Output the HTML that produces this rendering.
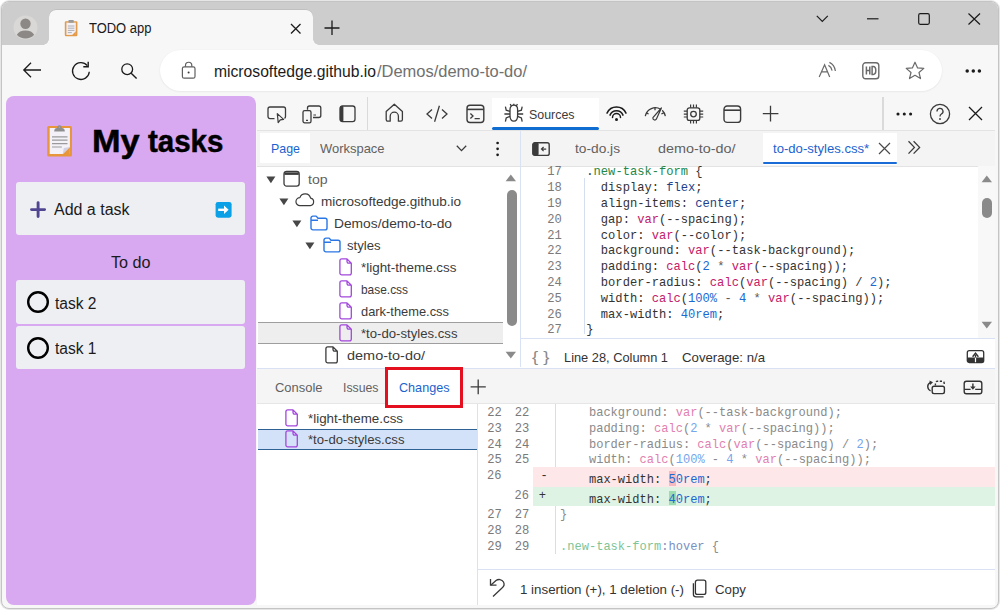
<!DOCTYPE html>
<html><head><meta charset="utf-8"><style>
html,body{margin:0;padding:0;width:1000px;height:610px;overflow:hidden;background:#ffffff;}
.t{position:absolute;white-space:pre;transform-origin:0 0;}
svg{overflow:visible}
</style></head><body>
<div style="position:absolute;left:0px;top:0px;width:1000px;height:610px;background:#e6e6e6;border-radius:9px;"></div>
<div style="position:absolute;left:1px;top:1px;width:998px;height:608px;background:#f7f7f7;border-radius:8px;border:1px solid #c4c4c4;box-sizing:border-box;"></div>
<div style="position:absolute;left:2px;top:2px;width:996px;height:43px;background:#cdcdcd;border-radius:7px 7px 0 0;"></div>
<div style="position:absolute;left:49px;top:9.5px;width:264px;height:36.5px;background:#f7f7f7;border-radius:7px 7px 0 0;box-shadow:0 -0.5px 0.5px rgba(0,0,0,0.12);"></div>
<div style="position:absolute;left:43px;top:39px;width:6px;height:6px;background:radial-gradient(circle at 0 0, #cdcdcd 5.5px, #f7f7f7 6px);"></div>
<div style="position:absolute;left:313px;top:39px;width:6px;height:6px;background:radial-gradient(circle at 100% 0, #cdcdcd 5.5px, #f7f7f7 6px);"></div>
<svg style="position:absolute;left:13px;top:15px;" width="26" height="26" viewBox="0 0 26 26" fill="none"><circle cx="12.5" cy="12.5" r="12" fill="#dad8d6"/><circle cx="12.5" cy="8.8" r="5.2" fill="#8b8885"/><path d="M3.8 19.8 A9.4 6.8 0 0 1 21.2 19.8 A12 12 0 0 1 3.8 19.8Z" fill="#8b8885"/></svg>
<svg style="position:absolute;left:64px;top:19px;" width="16" height="18" viewBox="0 0 16 18" fill="none"><rect x="0.8" y="2.2" width="12.6" height="15" rx="1.2" fill="#e39a4a"/><rect x="2.4" y="3.6" width="9.4" height="12.3" fill="#f3f0f6"/><path d="M8.2 15.9 L11.8 12.3 L11.8 15.9Z" fill="#e39a4a"/><rect x="4.4" y="1" width="5.4" height="2.8" rx="0.8" fill="#9a9a9a"/><path d="M3.8 7h6.6M3.8 9.2h6.6M3.8 11.4h6.6M3.8 13.6h4" stroke="#9aa0a6" stroke-width="0.8"/></svg>
<div id="t0" class="t" style="left:89.3px;top:19.15px;font-size:14px;line-height:18px;color:#1b1b1b;font-weight:400;font-family:'Liberation Sans', sans-serif;transform:scaleX(0.9253);">TODO app</div>
<svg style="position:absolute;left:290px;top:23px;" width="12" height="12" viewBox="0 0 12 12" fill="none"><path d="M1 1 L10.5 10.5 M10.5 1 L1 10.5" stroke="#1b1b1b" stroke-width="1.3"/></svg>
<svg style="position:absolute;left:324px;top:20px;" width="16" height="16" viewBox="0 0 16 16" fill="none"><path d="M8 0.5 V15 M0.5 8 H15.5" stroke="#1b1b1b" stroke-width="1.3"/></svg>
<svg style="position:absolute;left:816px;top:15px;" width="13" height="8" viewBox="0 0 13 8" fill="none"><path d="M0.8 0.8 L6.3 6.3 L11.8 0.8" stroke="#1b1b1b" stroke-width="1.2"/></svg>
<svg style="position:absolute;left:867px;top:18px;" width="12" height="2" viewBox="0 0 12 2" fill="none"><path d="M0 0.8 H11.5" stroke="#1b1b1b" stroke-width="1.2"/></svg>
<svg style="position:absolute;left:918px;top:13px;" width="12" height="12" viewBox="0 0 12 12" fill="none"><rect x="0.7" y="0.7" width="10.6" height="10.6" rx="1.5" stroke="#1b1b1b" stroke-width="1.2"/></svg>
<svg style="position:absolute;left:968px;top:13px;" width="13" height="12" viewBox="0 0 13 12" fill="none"><path d="M0.5 0.5 L12 11.5 M12 0.5 L0.5 11.5" stroke="#1b1b1b" stroke-width="1.2"/></svg>
<svg style="position:absolute;left:23px;top:62px;" width="19" height="16" viewBox="0 0 19 16" fill="none"><path d="M0.8 8 H18 M8 0.8 L0.8 8 L8 15.2" stroke="#1b1b1b" stroke-width="1.3"/></svg>
<svg style="position:absolute;left:71px;top:61px;" width="20" height="20" viewBox="0 0 20 20" fill="none"><path d="M18.3 10.8 A8.4 8.4 0 1 1 16.3 4.6" stroke="#1b1b1b" stroke-width="1.3"/><path d="M17.2 0.8 V5.8 H12.3" stroke="#1b1b1b" stroke-width="1.4"/></svg>
<svg style="position:absolute;left:121px;top:63px;" width="17" height="17" viewBox="0 0 17 17" fill="none"><circle cx="6.2" cy="6.2" r="5.4" stroke="#1b1b1b" stroke-width="1.3"/><path d="M10.2 10.2 L15.6 15.6" stroke="#1b1b1b" stroke-width="1.4"/></svg>
<div style="position:absolute;left:160px;top:50px;width:782px;height:41.3px;background:#ffffff;border-radius:21px;box-shadow:0 0.6px 2px rgba(0,0,0,0.09);"></div>
<svg style="position:absolute;left:181px;top:61px;" width="15" height="18" viewBox="0 0 15 18" fill="none"><path d="M4.5 5.8 V4.4 A3.15 3.15 0 0 1 10.8 4.4 V5.8" stroke="#5f5f5f" stroke-width="1.2"/><rect x="1.4" y="5.8" width="12.6" height="11.4" rx="1.8" stroke="#5f5f5f" stroke-width="1.2"/><circle cx="7.6" cy="11.4" r="1" fill="#3a3a3a"/></svg>
<div id="t1" class="t" style="left:214.3px;top:60.96px;font-size:16px;line-height:21px;color:#1b1b1b;font-weight:400;font-family:'Liberation Sans', sans-serif;transform:scaleX(0.9792);">microsoftedge.github.io</div>
<div id="t2" class="t" style="left:376.6px;top:60.96px;font-size:16px;line-height:21px;color:#707070;font-weight:400;font-family:'Liberation Sans', sans-serif;transform:scaleX(1.0285);">/Demos/demo-to-do/</div>
<svg style="position:absolute;left:818px;top:61px;" width="20" height="18" viewBox="0 0 20 18" fill="none"><path d="M1.2 16 L6.6 3.7 L11.7 16 M3.4 10.9 H9.8" stroke="#6a6a6a" stroke-width="1.2"/><path d="M10.4 4.4 Q13.3 5.8 14.1 9.6 M11.4 1.4 Q16.4 3.6 17.4 10" stroke="#6a6a6a" stroke-width="1.2"/></svg>
<svg style="position:absolute;left:862px;top:62px;" width="18" height="18" viewBox="0 0 18 18" fill="none"><rect x="0.8" y="0.8" width="16" height="16" rx="2.8" stroke="#6a6a6a" stroke-width="1.4"/><path d="M4.4 4.6 V12.4 M7.8 4.6 V12.4 M4.4 8.5 H7.8 M10.1 4.6 V12.4 H11.2 A2.6 3.9 0 0 0 11.2 4.6 Z" stroke="#6a6a6a" stroke-width="1.5"/></svg>
<svg style="position:absolute;left:905px;top:61px;" width="20" height="19" viewBox="0 0 20 19" fill="none"><path d="M10 1.2 L12.6 6.9 L18.8 7.4 L14 11.5 L15.5 17.6 L10 14.3 L4.5 17.6 L6 11.5 L1.2 7.4 L7.4 6.9 Z" stroke="#6a6a6a" stroke-width="1.2" stroke-linejoin="round"/></svg>
<svg style="position:absolute;left:965px;top:69px;" width="17" height="4" viewBox="0 0 17 4" fill="none"><circle cx="2.2" cy="2" r="1.75" fill="#1b1b1b"/><circle cx="8.3" cy="2" r="1.75" fill="#1b1b1b"/><circle cx="14.4" cy="2" r="1.75" fill="#1b1b1b"/></svg>
<div style="position:absolute;left:6px;top:96px;width:250px;height:509px;background:#d8a8f0;border-radius:8px;"></div>
<svg style="position:absolute;left:47px;top:124px;" width="27" height="34" viewBox="0 0 27 34" fill="none"><rect x="0.2" y="1.9" width="24.8" height="30.6" rx="1.6" fill="#e8963c"/><rect x="2.7" y="4" width="20.2" height="26" fill="#f4f2f8"/><path d="M15.8 30 L22.9 22.9 V30 Z" fill="#e8963c"/><path d="M15.8 30 L16.8 23.9 L22.9 22.9 Z" fill="#d3d0e3"/><path d="M7.2 7.6 C7.2 5.2 8 4.2 10 4 H15 C17 4.2 17.8 5.2 17.8 7.6 Z" fill="#8f8f8f"/><circle cx="12.5" cy="3.4" r="2.2" fill="#8f8f8f"/><circle cx="12.5" cy="3.2" r="0.8" fill="#e8963c"/><path d="M5 12.8h15.5M5 16.2h15.5M5 19.6h15.5M5 23h9.8" stroke="#9a9a9a" stroke-width="1.2"/></svg>
<div id="t3" class="t" style="left:91.8px;top:121.66px;font-size:31px;line-height:40px;color:#000000;font-weight:700;font-family:'Liberation Sans', sans-serif;transform:scaleX(1.1050);-webkit-text-stroke:0.5px #000;">My</div>
<div id="t4" class="t" style="left:148.2px;top:121.66px;font-size:31px;line-height:40px;color:#000000;font-weight:700;font-family:'Liberation Sans', sans-serif;transform:scaleX(0.9509);-webkit-text-stroke:0.5px #000;">tasks</div>
<div style="position:absolute;left:16px;top:182px;width:229px;height:53px;background:#eeeff3;border-radius:3px;"></div>
<svg style="position:absolute;left:30px;top:201px;" width="17" height="17" viewBox="0 0 17 17" fill="none"><path d="M8.1 1.6 V15.6 M1.5 8.6 H14.6" stroke="#4f4590" stroke-width="2.9" stroke-linecap="round"/></svg>
<div id="t5" class="t" style="left:53.5px;top:199.26px;font-size:16px;line-height:21px;color:#1b1b1b;font-weight:400;font-family:'Liberation Sans', sans-serif;transform:scaleX(0.9986);">Add a task</div>
<svg style="position:absolute;left:215px;top:201px;" width="17" height="17" viewBox="0 0 17 17" fill="none"><rect x="0.6" y="0.9" width="16" height="15.8" rx="2.4" fill="#0ca0e6"/><path d="M3.2 8.8 H9.6" stroke="#ffffff" stroke-width="2.4"/><path d="M9 4.6 L13.6 8.8 L9 13 Z" fill="#ffffff"/></svg>
<div id="t6" class="t" style="left:111.2px;top:252.36px;font-size:16px;line-height:21px;color:#1b1b1b;font-weight:400;font-family:'Liberation Sans', sans-serif;transform:scaleX(1.0092);">To do</div>
<div style="position:absolute;left:16px;top:280px;width:229px;height:44px;background:#eeeff3;border-radius:3px;"></div>
<div style="position:absolute;left:16px;top:326px;width:229px;height:43px;background:#eeeff3;border-radius:3px;"></div>
<svg style="position:absolute;left:27px;top:291px;" width="22" height="22" viewBox="0 0 22 22" fill="none"><circle cx="11" cy="11" r="9.8" stroke="#000" stroke-width="2.4"/></svg>
<div id="t7" class="t" style="left:54.6px;top:292.66px;font-size:16px;line-height:21px;color:#1b1b1b;font-weight:400;font-family:'Liberation Sans', sans-serif;transform:scaleX(0.9722);">task 2</div>
<svg style="position:absolute;left:27px;top:337px;" width="22" height="22" viewBox="0 0 22 22" fill="none"><circle cx="11" cy="11" r="9.8" stroke="#000" stroke-width="2.4"/></svg>
<div id="t8" class="t" style="left:54.6px;top:338.26px;font-size:16px;line-height:21px;color:#1b1b1b;font-weight:400;font-family:'Liberation Sans', sans-serif;transform:scaleX(0.9722);">task 1</div>
<div style="position:absolute;left:257px;top:96px;width:738px;height:509px;background:#ffffff;"></div>
<div style="position:absolute;left:257px;top:96px;width:738px;height:34px;background:#f7f7f7;border-bottom:1px solid #e3e3e3;"></div>
<div style="position:absolute;left:366.5px;top:97px;width:1.5px;height:33px;background:#dadada;"></div>
<div style="position:absolute;left:882px;top:97px;width:1.5px;height:33px;background:#dadada;"></div>
<svg style="position:absolute;left:267px;top:106px;" width="20" height="18" viewBox="0 0 20 18" fill="none"><path d="M7.5 12.6 H3 A2 2 0 0 1 1 10.6 V3 A2 2 0 0 1 3 1 H16.5 A2 2 0 0 1 18.5 3 V10.6 A2 2 0 0 1 17.5 12.4" stroke="#3b3b3b" stroke-width="1.3"/><path d="M10.3 7.6 L16.6 13.4 L13.3 13.8 L11.2 16.6 Z" stroke="#3b3b3b" stroke-width="1.2" stroke-linejoin="round"/></svg>
<svg style="position:absolute;left:302px;top:105px;" width="21" height="19" viewBox="0 0 21 19" fill="none"><path d="M5.5 4.8 V3 A2 2 0 0 1 7.5 1 H16.8 A2 2 0 0 1 18.8 3 V10.5 A2 2 0 0 1 16.8 12.5 H11" stroke="#3b3b3b" stroke-width="1.3"/><rect x="1" y="5.6" width="8" height="12.2" rx="1.6" stroke="#3b3b3b" stroke-width="1.3"/><path d="M4 15.4 H6 M11.4 10 H14" stroke="#3b3b3b" stroke-width="1.2"/></svg>
<svg style="position:absolute;left:339px;top:105px;" width="17" height="18" viewBox="0 0 17 18" fill="none"><rect x="1" y="1" width="15" height="15.6" rx="2.4" stroke="#3b3b3b" stroke-width="1.3"/><rect x="1" y="1" width="3.4" height="15.6" rx="1" fill="#3b3b3b"/></svg>
<svg style="position:absolute;left:385px;top:103px;" width="19" height="20" viewBox="0 0 19 20" fill="none"><path d="M1.2 8.6 L9.3 1.2 L17.4 8.6 V16.6 A1.6 1.6 0 0 1 15.8 18.2 H13.4 V13.3 A4.1 4.1 0 0 0 5.2 13.3 V18.2 H2.8 A1.6 1.6 0 0 1 1.2 16.6 Z" stroke="#3b3b3b" stroke-width="1.3" stroke-linejoin="round"/></svg>
<svg style="position:absolute;left:426px;top:105px;" width="22" height="18" viewBox="0 0 22 18" fill="none"><path d="M6 4.4 L1 9 L6 13.6 M16 4.4 L21 9 L16 13.6 M13.4 0.8 L8.6 16.8" stroke="#3b3b3b" stroke-width="1.3"/></svg>
<svg style="position:absolute;left:466px;top:104px;" width="19" height="20" viewBox="0 0 19 20" fill="none"><rect x="1" y="1.3" width="16.8" height="17.2" rx="3" stroke="#3b3b3b" stroke-width="1.4"/><path d="M1 5.4 H17.8" stroke="#3b3b3b" stroke-width="1.6"/><path d="M4.4 9.6 L7 12 L4.4 14.4 M8.6 14.6 H13.8" stroke="#3b3b3b" stroke-width="1.3"/></svg>
<div style="position:absolute;left:492px;top:98px;width:107px;height:32px;background:#ffffff;"></div>
<div style="position:absolute;left:492px;top:126.5px;width:107px;height:3.5px;background:#0f6cd0;border-radius:2px;"></div>
<svg style="position:absolute;left:503px;top:103px;" width="22" height="20" viewBox="0 0 22 20" fill="none"><path d="M7 6.5 C7 3.8 8.4 2.2 10.8 2.2 C13.2 2.2 14.6 3.8 14.6 6.5 V12.8 C14.6 16.4 13 18.2 10.8 18.2 C8.6 18.2 7 16.4 7 12.8 Z" stroke="#3b3b3b" stroke-width="1.3"/><path d="M8.4 3.2 L7.2 1 M13.2 3.2 L14.4 1 M10.8 2.2 V0.8 M7 8.4 L3.2 7.2 L2.4 3.6 M14.6 8.4 L18.4 7.2 L19.2 3.6 M7 11 H1.4 M14.6 11 H20.2 M7 13.4 L3.2 15 L2.4 18.6 M14.6 13.4 L18.4 15 L19.2 18.6" stroke="#3b3b3b" stroke-width="1.3"/></svg>
<div id="t9" class="t" style="left:529.2px;top:105.62px;font-size:13.5px;line-height:18px;color:#3b3b3b;font-weight:400;font-family:'Liberation Sans', sans-serif;transform:scaleX(0.9186);">Sources</div>
<svg style="position:absolute;left:604px;top:103px;" width="25" height="19" viewBox="0 0 25 19" fill="none"><path d="M3 10.1 A10.5 10.5 0 0 1 22 10.1 M6 12.1 A7 7 0 0 1 19 12.1 M8.5 14.5 A4 4 0 0 1 16.5 14.5" stroke="#1b1b1b" stroke-width="1.5" stroke-linecap="round"/><circle cx="12.5" cy="16.4" r="1.5" fill="#1b1b1b"/></svg>
<svg style="position:absolute;left:643px;top:104px;" width="25" height="18" viewBox="0 0 25 18" fill="none"><path d="M2.4 11.6 A10.2 10.2 0 0 1 17.6 5.2 M19.6 6.8 A10.2 10.2 0 0 1 22.2 11.6" stroke="#3b3b3b" stroke-width="1.3" stroke-linecap="round"/><path d="M3.3 8.8 L5.6 10 M12 3.6 V6.2 M20.7 8.8 L18.4 10" stroke="#3b3b3b" stroke-width="1.3"/><path d="M18.4 4 L13.3 15.2 A1.9 1.9 0 0 1 9.9 13.7 Z" stroke="#3b3b3b" stroke-width="1.2" stroke-linejoin="round"/></svg>
<svg style="position:absolute;left:683px;top:104px;" width="21" height="20" viewBox="0 0 21 20" fill="none"><rect x="4.2" y="3.8" width="12.6" height="12.6" rx="2.2" stroke="#3b3b3b" stroke-width="1.3"/><circle cx="10.5" cy="10.1" r="2.8" stroke="#3b3b3b" stroke-width="1.3"/><path d="M7.6 0.6 V3.8 M10.5 0.6 V3.8 M13.4 0.6 V3.8 M7.6 16.4 V19.6 M10.5 16.4 V19.6 M13.4 16.4 V19.6 M0.8 7.2 H4.2 M0.8 10.1 H4.2 M0.8 13 H4.2 M16.8 7.2 H20.2 M16.8 10.1 H20.2 M16.8 13 H20.2" stroke="#3b3b3b" stroke-width="1.2"/></svg>
<svg style="position:absolute;left:723px;top:105px;" width="19" height="18" viewBox="0 0 19 18" fill="none"><rect x="1" y="1" width="16.6" height="16.4" rx="3.2" stroke="#3b3b3b" stroke-width="1.4"/><path d="M1 5.2 H17.6" stroke="#3b3b3b" stroke-width="1.6"/></svg>
<svg style="position:absolute;left:762px;top:105px;" width="17" height="17" viewBox="0 0 17 17" fill="none"><path d="M8.5 0.8 V16.4 M0.8 8.6 H16.4" stroke="#3b3b3b" stroke-width="1.3"/></svg>
<svg style="position:absolute;left:896px;top:112px;" width="17" height="4" viewBox="0 0 17 4" fill="none"><circle cx="2" cy="2" r="1.55" fill="#1b1b1b"/><circle cx="8.3" cy="2" r="1.55" fill="#1b1b1b"/><circle cx="14.6" cy="2" r="1.55" fill="#1b1b1b"/></svg>
<svg style="position:absolute;left:929px;top:103px;" width="22" height="22" viewBox="0 0 22 22" fill="none"><circle cx="11" cy="11" r="9.6" stroke="#3b3b3b" stroke-width="1.3"/><path d="M8 8.4 A3 3 0 1 1 12.4 11 C11.4 11.6 11 12.2 11 13.4" stroke="#3b3b3b" stroke-width="1.3"/><circle cx="11" cy="16" r="0.95" fill="#3b3b3b"/></svg>
<svg style="position:absolute;left:968px;top:106px;" width="15" height="15" viewBox="0 0 15 15" fill="none"><path d="M1 1 L14 14 M14 1 L1 14" stroke="#1b1b1b" stroke-width="1.3"/></svg>
<div style="position:absolute;left:257px;top:131px;width:263px;height:35px;background:#f4f4f4;border-bottom:1px solid #e3e3e3;"></div>
<div style="position:absolute;left:260px;top:133px;width:50px;height:29.5px;background:#ffffff;"></div>
<div id="t10" class="t" style="left:270.7px;top:140.26px;font-size:12.8px;line-height:17px;color:#1a63cf;font-weight:400;font-family:'Liberation Sans', sans-serif;transform:scaleX(0.9702);">Page</div>
<div id="t11" class="t" style="left:319.7px;top:140.26px;font-size:12.8px;line-height:17px;color:#616161;font-weight:400;font-family:'Liberation Sans', sans-serif;transform:scaleX(1.0113);">Workspace</div>
<svg style="position:absolute;left:456px;top:145px;" width="11" height="7" viewBox="0 0 11 7" fill="none"><path d="M0.8 0.8 L5.5 5.6 L10.2 0.8" stroke="#3b3b3b" stroke-width="1.3"/></svg>
<svg style="position:absolute;left:495px;top:141px;" width="5" height="16" viewBox="0 0 5 16" fill="none"><circle cx="2.6" cy="2" r="1.35" fill="#1b1b1b"/><circle cx="2.6" cy="7.8" r="1.35" fill="#1b1b1b"/><circle cx="2.6" cy="13.8" r="1.35" fill="#1b1b1b"/></svg>
<div style="position:absolute;left:521px;top:131px;width:474px;height:35px;background:#f4f4f4;border-bottom:1px solid #e3e3e3;"></div>
<div style="position:absolute;left:520px;top:131px;width:1px;height:236px;background:#d8e2f4;"></div>
<svg style="position:absolute;left:532px;top:142px;" width="19" height="15" viewBox="0 0 19 15" fill="none"><rect x="0.8" y="0.8" width="16.4" height="12.6" rx="2" stroke="#3b3b3b" stroke-width="1.4"/><rect x="0.8" y="0.8" width="5.8" height="12.6" rx="1.4" fill="#3b3b3b"/><path d="M14.2 7.1 H9.6 M11.6 5 L9.5 7.1 L11.6 9.2" stroke="#3b3b3b" stroke-width="1.2"/></svg>
<div id="t12" class="t" style="left:574.5px;top:140.26px;font-size:12.8px;line-height:17px;color:#616161;font-weight:400;font-family:'Liberation Sans', sans-serif;transform:scaleX(1.0722);">to-do.js</div>
<div id="t13" class="t" style="left:657.5px;top:140.26px;font-size:12.8px;line-height:17px;color:#616161;font-weight:400;font-family:'Liberation Sans', sans-serif;transform:scaleX(1.1232);">demo-to-do/</div>
<div style="position:absolute;left:763px;top:133px;width:134px;height:32px;background:#ffffff;"></div>
<div style="position:absolute;left:763px;top:162px;width:134px;height:2.4px;background:#1a6ad8;border-radius:1px;"></div>
<div id="t14" class="t" style="left:773.4px;top:140.36px;font-size:12.8px;line-height:17px;color:#1a63cf;font-weight:400;font-family:'Liberation Sans', sans-serif;transform:scaleX(1.0248);">to-do-styles.css*</div>
<svg style="position:absolute;left:878px;top:142px;" width="13" height="13" viewBox="0 0 13 13" fill="none"><path d="M1 1 L12 12 M12 1 L1 12" stroke="#4a4a4a" stroke-width="1.2"/></svg>
<svg style="position:absolute;left:907px;top:140px;" width="15" height="15" viewBox="0 0 15 15" fill="none"><path d="M1.5 1.2 L7.4 7.4 L1.5 13.6 M6.6 1.2 L12.6 7.4 L6.6 13.6" stroke="#3b3b3b" stroke-width="1.3"/></svg>
<div style="position:absolute;left:258px;top:322px;width:245px;height:21.5px;background:#eeeeee;border-top:1.5px solid #9e9e9e;border-bottom:1.5px solid #9e9e9e;box-sizing:border-box;"></div>
<svg style="position:absolute;left:265.5px;top:175.5px;" width="10" height="8" viewBox="0 0 10 8" fill="none"><path d="M0.4 0.6 H9.4 L4.9 7.2 Z" fill="#474747"/></svg>
<svg style="position:absolute;left:283px;top:170px;" width="18" height="17" viewBox="0 0 18 17" fill="none"><rect x="1" y="1.3" width="15.2" height="14.8" rx="2.6" stroke="#3b3b3b" stroke-width="1.3"/><path d="M1.4 3.6 H15.8" stroke="#3b3b3b" stroke-width="2.6"/></svg>
<div id="t15" class="t" style="left:307.8px;top:171.16px;font-size:13.4px;line-height:17px;color:#616161;font-weight:400;font-family:'Liberation Sans', sans-serif;transform:scaleX(1.0523);">top</div>
<svg style="position:absolute;left:279px;top:197.5px;" width="10" height="8" viewBox="0 0 10 8" fill="none"><path d="M0.4 0.6 H9.4 L4.9 7.2 Z" fill="#474747"/></svg>
<svg style="position:absolute;left:295px;top:193px;" width="20" height="14" viewBox="0 0 20 14" fill="none"><path d="M5 12.6 H15.2 A3.8 3.8 0 0 0 15.6 5.1 A5.6 5.6 0 0 0 4.9 4.6 A4 4 0 0 0 5 12.6 Z" stroke="#3b3b3b" stroke-width="1.2" stroke-linejoin="round"/></svg>
<div id="t16" class="t" style="left:320.8px;top:193.16px;font-size:13.4px;line-height:17px;color:#3b3b3b;font-weight:400;font-family:'Liberation Sans', sans-serif;transform:scaleX(1.0112);">microsoftedge.github.io</div>
<svg style="position:absolute;left:292px;top:219.5px;" width="10" height="8" viewBox="0 0 10 8" fill="none"><path d="M0.4 0.6 H9.4 L4.9 7.2 Z" fill="#474747"/></svg>
<svg style="position:absolute;left:309.5px;top:214.5px;" width="18" height="16" viewBox="0 0 18 16" fill="none"><path d="M1 3 A1.9 1.9 0 0 1 2.9 1.1 H6.2 L8 3.2 H15.1 A1.9 1.9 0 0 1 17 5.1 V13 A1.9 1.9 0 0 1 15.1 14.9 H2.9 A1.9 1.9 0 0 1 1 13 Z M1 5.2 H8" stroke="#2a76e6" stroke-width="1.4" stroke-linejoin="round"/></svg>
<div id="t17" class="t" style="left:333.8px;top:215.16px;font-size:13.4px;line-height:17px;color:#3b3b3b;font-weight:400;font-family:'Liberation Sans', sans-serif;transform:scaleX(1.0294);">Demos/demo-to-do</div>
<svg style="position:absolute;left:305px;top:241.5px;" width="10" height="8" viewBox="0 0 10 8" fill="none"><path d="M0.4 0.6 H9.4 L4.9 7.2 Z" fill="#474747"/></svg>
<svg style="position:absolute;left:322.5px;top:236.5px;" width="18" height="16" viewBox="0 0 18 16" fill="none"><path d="M1 3 A1.9 1.9 0 0 1 2.9 1.1 H6.2 L8 3.2 H15.1 A1.9 1.9 0 0 1 17 5.1 V13 A1.9 1.9 0 0 1 15.1 14.9 H2.9 A1.9 1.9 0 0 1 1 13 Z M1 5.2 H8" stroke="#2a76e6" stroke-width="1.4" stroke-linejoin="round"/></svg>
<div id="t18" class="t" style="left:346.8px;top:237.16px;font-size:13.4px;line-height:17px;color:#3b3b3b;font-weight:400;font-family:'Liberation Sans', sans-serif;transform:scaleX(0.9785);">styles</div>
<svg style="position:absolute;left:337.5px;top:258.0px;" width="15" height="18" viewBox="0 0 15 18" fill="none"><path d="M1.9 2.8 A1.9 1.9 0 0 1 3.8 0.9 H9 L13.3 5.2 V15 A1.9 1.9 0 0 1 11.4 16.9 H3.8 A1.9 1.9 0 0 1 1.9 15 Z M9 0.9 V3.6 A1.6 1.6 0 0 0 10.6 5.2 H13.3" stroke="#a347dc" stroke-width="1.3" stroke-linejoin="round"/></svg>
<div id="t19" class="t" style="left:360.6px;top:259.16px;font-size:13.4px;line-height:17px;color:#3b3b3b;font-weight:400;font-family:'Liberation Sans', sans-serif;transform:scaleX(1.0025);">*light-theme.css</div>
<svg style="position:absolute;left:337.5px;top:280.0px;" width="15" height="18" viewBox="0 0 15 18" fill="none"><path d="M1.9 2.8 A1.9 1.9 0 0 1 3.8 0.9 H9 L13.3 5.2 V15 A1.9 1.9 0 0 1 11.4 16.9 H3.8 A1.9 1.9 0 0 1 1.9 15 Z M9 0.9 V3.6 A1.6 1.6 0 0 0 10.6 5.2 H13.3" stroke="#a347dc" stroke-width="1.3" stroke-linejoin="round"/></svg>
<div id="t20" class="t" style="left:360.6px;top:281.16px;font-size:13.4px;line-height:17px;color:#3b3b3b;font-weight:400;font-family:'Liberation Sans', sans-serif;transform:scaleX(0.8894);">base.css</div>
<svg style="position:absolute;left:337.5px;top:302.0px;" width="15" height="18" viewBox="0 0 15 18" fill="none"><path d="M1.9 2.8 A1.9 1.9 0 0 1 3.8 0.9 H9 L13.3 5.2 V15 A1.9 1.9 0 0 1 11.4 16.9 H3.8 A1.9 1.9 0 0 1 1.9 15 Z M9 0.9 V3.6 A1.6 1.6 0 0 0 10.6 5.2 H13.3" stroke="#a347dc" stroke-width="1.3" stroke-linejoin="round"/></svg>
<div id="t21" class="t" style="left:360.6px;top:303.16px;font-size:13.4px;line-height:17px;color:#3b3b3b;font-weight:400;font-family:'Liberation Sans', sans-serif;transform:scaleX(0.9614);">dark-theme.css</div>
<svg style="position:absolute;left:337.5px;top:324.0px;" width="15" height="18" viewBox="0 0 15 18" fill="none"><path d="M1.9 2.8 A1.9 1.9 0 0 1 3.8 0.9 H9 L13.3 5.2 V15 A1.9 1.9 0 0 1 11.4 16.9 H3.8 A1.9 1.9 0 0 1 1.9 15 Z M9 0.9 V3.6 A1.6 1.6 0 0 0 10.6 5.2 H13.3" stroke="#a347dc" stroke-width="1.3" stroke-linejoin="round"/></svg>
<div id="t22" class="t" style="left:360.6px;top:325.16px;font-size:13.4px;line-height:17px;color:#3b3b3b;font-weight:400;font-family:'Liberation Sans', sans-serif;transform:scaleX(0.9823);">*to-do-styles.css</div>
<svg style="position:absolute;left:324px;top:346.0px;" width="15" height="18" viewBox="0 0 15 18" fill="none"><path d="M1.9 2.8 A1.9 1.9 0 0 1 3.8 0.9 H9 L13.3 5.2 V15 A1.9 1.9 0 0 1 11.4 16.9 H3.8 A1.9 1.9 0 0 1 1.9 15 Z M9 0.9 V3.6 A1.6 1.6 0 0 0 10.6 5.2 H13.3" stroke="#3b3b3b" stroke-width="1.3" stroke-linejoin="round"/></svg>
<div id="t23" class="t" style="left:346.8px;top:347.16px;font-size:13.4px;line-height:17px;color:#3b3b3b;font-weight:400;font-family:'Liberation Sans', sans-serif;transform:scaleX(1.0803);">demo-to-do/</div>
<svg style="position:absolute;left:505px;top:174px;" width="12" height="8" viewBox="0 0 12 8" fill="none"><path d="M0.6 7.2 H11 L5.8 0.6 Z" fill="#8a8a8a"/></svg>
<div style="position:absolute;left:506.5px;top:190px;width:10px;height:136px;background:#8a8a8a;border-radius:5px;"></div>
<svg style="position:absolute;left:505px;top:351px;" width="12" height="8" viewBox="0 0 12 8" fill="none"><path d="M0.6 0.8 H11 L5.8 7.4 Z" fill="#8a8a8a"/></svg>
<div id="t24" class="t" style="left:547.2px;top:164.26px;font-size:12.17px;line-height:16px;color:#7a7a7a;font-weight:400;font-family:'Liberation Mono', monospace;">17</div>
<div id="t25" class="t" style="left:586.3px;top:164.27px;font-size:12.12px;line-height:16px;color:#1b1b1b;font-weight:400;font-family:'Liberation Mono', monospace;"><span style="color:#333333">.</span><span style="color:#238747">new-task-form</span><span style="color:#333333"> {</span></div>
<div id="t26" class="t" style="left:547.2px;top:180.07px;font-size:12.17px;line-height:16px;color:#7a7a7a;font-weight:400;font-family:'Liberation Mono', monospace;">18</div>
<div id="t27" class="t" style="left:586.3px;top:180.08px;font-size:12.12px;line-height:16px;color:#1b1b1b;font-weight:400;font-family:'Liberation Mono', monospace;"><span style="color:#333333">  display: </span><span style="color:#233f8c">flex</span><span style="color:#333333">;</span></div>
<div id="t28" class="t" style="left:547.2px;top:195.88px;font-size:12.17px;line-height:16px;color:#7a7a7a;font-weight:400;font-family:'Liberation Mono', monospace;">19</div>
<div id="t29" class="t" style="left:586.3px;top:195.89px;font-size:12.12px;line-height:16px;color:#1b1b1b;font-weight:400;font-family:'Liberation Mono', monospace;"><span style="color:#333333">  align-items: </span><span style="color:#233f8c">center</span><span style="color:#333333">;</span></div>
<div id="t30" class="t" style="left:547.2px;top:211.69px;font-size:12.17px;line-height:16px;color:#7a7a7a;font-weight:400;font-family:'Liberation Mono', monospace;">20</div>
<div id="t31" class="t" style="left:586.3px;top:211.70px;font-size:12.12px;line-height:16px;color:#1b1b1b;font-weight:400;font-family:'Liberation Mono', monospace;"><span style="color:#333333">  gap: </span><span style="color:#c4206a">var</span><span style="color:#333333">(--spacing);</span></div>
<div id="t32" class="t" style="left:547.2px;top:227.50px;font-size:12.17px;line-height:16px;color:#7a7a7a;font-weight:400;font-family:'Liberation Mono', monospace;">21</div>
<div id="t33" class="t" style="left:586.3px;top:227.51px;font-size:12.12px;line-height:16px;color:#1b1b1b;font-weight:400;font-family:'Liberation Mono', monospace;"><span style="color:#333333">  color: </span><span style="color:#c4206a">var</span><span style="color:#333333">(--color);</span></div>
<div id="t34" class="t" style="left:547.2px;top:243.31px;font-size:12.17px;line-height:16px;color:#7a7a7a;font-weight:400;font-family:'Liberation Mono', monospace;">22</div>
<div id="t35" class="t" style="left:586.3px;top:243.32px;font-size:12.12px;line-height:16px;color:#1b1b1b;font-weight:400;font-family:'Liberation Mono', monospace;"><span style="color:#333333">  background: </span><span style="color:#c4206a">var</span><span style="color:#333333">(--task-background);</span></div>
<div id="t36" class="t" style="left:547.2px;top:259.12px;font-size:12.17px;line-height:16px;color:#7a7a7a;font-weight:400;font-family:'Liberation Mono', monospace;">23</div>
<div id="t37" class="t" style="left:586.3px;top:259.13px;font-size:12.12px;line-height:16px;color:#1b1b1b;font-weight:400;font-family:'Liberation Mono', monospace;"><span style="color:#333333">  padding: </span><span style="color:#c4206a">calc</span><span style="color:#333333">(</span><span style="color:#1b69d2">2</span><span style="color:#5a5a5a"> * </span><span style="color:#c4206a">var</span><span style="color:#333333">(--spacing));</span></div>
<div id="t38" class="t" style="left:547.2px;top:274.93px;font-size:12.17px;line-height:16px;color:#7a7a7a;font-weight:400;font-family:'Liberation Mono', monospace;">24</div>
<div id="t39" class="t" style="left:586.3px;top:274.94px;font-size:12.12px;line-height:16px;color:#1b1b1b;font-weight:400;font-family:'Liberation Mono', monospace;"><span style="color:#333333">  border-radius: </span><span style="color:#c4206a">calc</span><span style="color:#333333">(</span><span style="color:#c4206a">var</span><span style="color:#333333">(--spacing) / </span><span style="color:#1b69d2">2</span><span style="color:#333333">);</span></div>
<div id="t40" class="t" style="left:547.2px;top:290.74px;font-size:12.17px;line-height:16px;color:#7a7a7a;font-weight:400;font-family:'Liberation Mono', monospace;">25</div>
<div id="t41" class="t" style="left:586.3px;top:290.75px;font-size:12.12px;line-height:16px;color:#1b1b1b;font-weight:400;font-family:'Liberation Mono', monospace;"><span style="color:#333333">  width: </span><span style="color:#c4206a">calc</span><span style="color:#333333">(</span><span style="color:#1b69d2">100%</span><span style="color:#5a5a5a"> - </span><span style="color:#1b69d2">4</span><span style="color:#5a5a5a"> * </span><span style="color:#c4206a">var</span><span style="color:#333333">(--spacing));</span></div>
<div id="t42" class="t" style="left:547.2px;top:306.55px;font-size:12.17px;line-height:16px;color:#7a7a7a;font-weight:400;font-family:'Liberation Mono', monospace;">26</div>
<div id="t43" class="t" style="left:586.3px;top:306.56px;font-size:12.12px;line-height:16px;color:#1b1b1b;font-weight:400;font-family:'Liberation Mono', monospace;"><span style="color:#333333">  max-width: </span><span style="color:#1b69d2">40rem</span><span style="color:#333333">;</span></div>
<div id="t44" class="t" style="left:547.2px;top:322.36px;font-size:12.17px;line-height:16px;color:#7a7a7a;font-weight:400;font-family:'Liberation Mono', monospace;">27</div>
<div id="t45" class="t" style="left:586.3px;top:322.37px;font-size:12.12px;line-height:16px;color:#1b1b1b;font-weight:400;font-family:'Liberation Mono', monospace;"><span style="color:#333333">}</span></div>
<div style="position:absolute;left:584px;top:178px;width:1px;height:156px;background:#d5def0;"></div>
<div style="position:absolute;left:978px;top:166px;width:17px;height:172px;background:#f8f8f8;"></div>
<svg style="position:absolute;left:981px;top:175px;" width="12" height="8" viewBox="0 0 12 8" fill="none"><path d="M0.6 7.2 H11 L5.8 0.6 Z" fill="#8a8a8a"/></svg>
<div style="position:absolute;left:982px;top:198px;width:10px;height:20px;background:#8a8a8a;border-radius:5px;"></div>
<svg style="position:absolute;left:981px;top:321px;" width="12" height="8" viewBox="0 0 12 8" fill="none"><path d="M0.6 0.8 H11 L5.8 7.4 Z" fill="#8a8a8a"/></svg>
<div style="position:absolute;left:521px;top:338px;width:474px;height:30px;background:#ffffff;border-top:1px solid #d8e2f4;"></div>
<div style="position:absolute;left:257px;top:368px;width:738px;height:1px;background:#d8e2f4;"></div>
<div id="t46" class="t" style="left:531.8px;top:346.93px;font-size:15.5px;line-height:20px;color:#8a8a8a;font-weight:400;font-family:'Liberation Sans', sans-serif;transform:scaleX(1.1928);">{ }</div>
<div id="t47" class="t" style="left:563.5px;top:349.40px;font-size:13px;line-height:17px;color:#333333;font-weight:400;font-family:'Liberation Sans', sans-serif;transform:scaleX(0.9856);">Line 28, Column 1</div>
<div id="t48" class="t" style="left:681.5px;top:349.40px;font-size:13px;line-height:17px;color:#333333;font-weight:400;font-family:'Liberation Sans', sans-serif;transform:scaleX(1.0163);">Coverage: n/a</div>
<svg style="position:absolute;left:966px;top:349px;" width="19" height="15" viewBox="0 0 19 15" fill="none"><rect x="1.3" y="1.7" width="16.4" height="11.8" rx="2" stroke="#333" stroke-width="1.3" fill="#fff"/><rect x="1.3" y="8.6" width="16.4" height="4.9" rx="1" fill="#333"/><path d="M9.5 9 V6" stroke="#333" stroke-width="1.3"/><path d="M9.5 13.2 V8.6" stroke="#fff" stroke-width="1.2"/><path d="M6.6 7.8 L9.5 4.2 L12.4 7.8" stroke="#333" stroke-width="1.4" fill="none"/></svg>
<div style="position:absolute;left:257px;top:369px;width:738px;height:35px;background:#f5f5f5;border-bottom:1px solid #e6e6e6;box-sizing:border-box;"></div>
<div style="position:absolute;left:386px;top:369px;width:75px;height:35px;background:#ffffff;"></div>
<div id="t49" class="t" style="left:274.5px;top:379.16px;font-size:13.4px;line-height:17px;color:#616161;font-weight:400;font-family:'Liberation Sans', sans-serif;transform:scaleX(0.9666);">Console</div>
<div id="t50" class="t" style="left:342.8px;top:379.16px;font-size:13.4px;line-height:17px;color:#616161;font-weight:400;font-family:'Liberation Sans', sans-serif;transform:scaleX(0.9172);">Issues</div>
<div id="t51" class="t" style="left:398.7px;top:379.16px;font-size:13.4px;line-height:17px;color:#1a63cf;font-weight:400;font-family:'Liberation Sans', sans-serif;transform:scaleX(0.9420);">Changes</div>
<svg style="position:absolute;left:470px;top:379px;" width="17" height="16" viewBox="0 0 17 16" fill="none"><path d="M8.2 0.6 V15.2 M0.6 7.9 H15.8" stroke="#3b3b3b" stroke-width="1.3"/></svg>
<div style="position:absolute;left:384.5px;top:367px;width:78.5px;height:40.7px;border:3px solid #e5101f;box-sizing:border-box;"></div>
<svg style="position:absolute;left:926px;top:380px;" width="21" height="16" viewBox="0 0 21 16" fill="none"><path d="M4.6 10.8 A4.5 4.5 0 0 1 4.2 2.6" stroke="#333" stroke-width="1.4"/><path d="M3.4 0.6 L7 2.2 L4.2 5 Z" fill="#333"/><rect x="6.2" y="6.2" width="12.2" height="7.4" rx="1.8" stroke="#333" stroke-width="1.4"/><path d="M9.4 5.6 V3.2 A1.9 1.9 0 0 1 11.3 1.3 H16.3 A1.9 1.9 0 0 1 18.2 3.2 V5.6" stroke="#333" stroke-width="1.4" stroke-dasharray="2.2 1.6"/></svg>
<svg style="position:absolute;left:963px;top:380px;" width="20" height="16" viewBox="0 0 20 16" fill="none"><rect x="1.2" y="1.2" width="17.6" height="12.6" rx="2.2" stroke="#333" stroke-width="1.4"/><path d="M1.2 9.4 H7.6 M12.2 9.4 H18.8" stroke="#333" stroke-width="1.3"/><path d="M9.9 3.4 V7.6" stroke="#333" stroke-width="1.4"/><path d="M7.2 6.6 L12.6 6.6 L9.9 9.8 Z" fill="#333"/></svg>
<div style="position:absolute;left:477px;top:404px;width:1px;height:201px;background:#d8e2f4;"></div>
<svg style="position:absolute;left:284px;top:408.5px;" width="15" height="18" viewBox="0 0 15 18" fill="none"><path d="M1.9 2.8 A1.9 1.9 0 0 1 3.8 0.9 H9 L13.3 5.2 V15 A1.9 1.9 0 0 1 11.4 16.9 H3.8 A1.9 1.9 0 0 1 1.9 15 Z M9 0.9 V3.6 A1.6 1.6 0 0 0 10.6 5.2 H13.3" stroke="#a347dc" stroke-width="1.3" stroke-linejoin="round"/></svg>
<div id="t52" class="t" style="left:307.6px;top:410.06px;font-size:13.4px;line-height:17px;color:#3b3b3b;font-weight:400;font-family:'Liberation Sans', sans-serif;transform:scaleX(0.9972);">*light-theme.css</div>
<div style="position:absolute;left:258px;top:428.5px;width:219px;height:21px;background:#d3e2f8;border-top:1.5px solid #2e6294;border-bottom:1.5px solid #2e6294;box-sizing:border-box;"></div>
<svg style="position:absolute;left:284px;top:430px;" width="15" height="18" viewBox="0 0 15 18" fill="none"><path d="M1.9 2.8 A1.9 1.9 0 0 1 3.8 0.9 H9 L13.3 5.2 V15 A1.9 1.9 0 0 1 11.4 16.9 H3.8 A1.9 1.9 0 0 1 1.9 15 Z M9 0.9 V3.6 A1.6 1.6 0 0 0 10.6 5.2 H13.3" stroke="#a347dc" stroke-width="1.3" stroke-linejoin="round"/></svg>
<div id="t53" class="t" style="left:307.6px;top:430.76px;font-size:13.4px;line-height:17px;color:#3b3b3b;font-weight:400;font-family:'Liberation Sans', sans-serif;transform:scaleX(0.9823);">*to-do-styles.css</div>
<div style="position:absolute;left:555px;top:404px;width:1px;height:150px;background:#d5def0;"></div>
<div id="t54" class="t" style="left:487.2px;top:405.06px;font-size:12.17px;line-height:16px;color:#7a7a7a;font-weight:400;font-family:'Liberation Mono', monospace;">22</div>
<div id="t55" class="t" style="left:514.8px;top:405.06px;font-size:12.17px;line-height:16px;color:#7a7a7a;font-weight:400;font-family:'Liberation Mono', monospace;">22</div>
<div id="t56" class="t" style="left:560px;top:405.09px;font-size:12.05px;line-height:16px;color:#1b1b1b;font-weight:400;font-family:'Liberation Mono', monospace;"><span style="color:#8a8a8a">    background: </span><span style="color:#e27fb0">var</span><span style="color:#8a8a8a">(--task-background);</span></div>
<div id="t57" class="t" style="left:487.2px;top:420.76px;font-size:12.17px;line-height:16px;color:#7a7a7a;font-weight:400;font-family:'Liberation Mono', monospace;">23</div>
<div id="t58" class="t" style="left:514.8px;top:420.76px;font-size:12.17px;line-height:16px;color:#7a7a7a;font-weight:400;font-family:'Liberation Mono', monospace;">23</div>
<div id="t59" class="t" style="left:560px;top:420.79px;font-size:12.05px;line-height:16px;color:#1b1b1b;font-weight:400;font-family:'Liberation Mono', monospace;"><span style="color:#8a8a8a">    padding: </span><span style="color:#e27fb0">calc</span><span style="color:#8a8a8a">(</span><span style="color:#76a6ec">2</span><span style="color:#8a8a8a"> * </span><span style="color:#e27fb0">var</span><span style="color:#8a8a8a">(--spacing));</span></div>
<div id="t60" class="t" style="left:487.2px;top:436.56px;font-size:12.17px;line-height:16px;color:#7a7a7a;font-weight:400;font-family:'Liberation Mono', monospace;">24</div>
<div id="t61" class="t" style="left:514.8px;top:436.56px;font-size:12.17px;line-height:16px;color:#7a7a7a;font-weight:400;font-family:'Liberation Mono', monospace;">24</div>
<div id="t62" class="t" style="left:560px;top:436.59px;font-size:12.05px;line-height:16px;color:#1b1b1b;font-weight:400;font-family:'Liberation Mono', monospace;"><span style="color:#8a8a8a">    border-radius: </span><span style="color:#e27fb0">calc</span><span style="color:#8a8a8a">(</span><span style="color:#e27fb0">var</span><span style="color:#8a8a8a">(--spacing) / </span><span style="color:#76a6ec">2</span><span style="color:#8a8a8a">);</span></div>
<div id="t63" class="t" style="left:487.2px;top:452.26px;font-size:12.17px;line-height:16px;color:#7a7a7a;font-weight:400;font-family:'Liberation Mono', monospace;">25</div>
<div id="t64" class="t" style="left:514.8px;top:452.26px;font-size:12.17px;line-height:16px;color:#7a7a7a;font-weight:400;font-family:'Liberation Mono', monospace;">25</div>
<div id="t65" class="t" style="left:560px;top:452.29px;font-size:12.05px;line-height:16px;color:#1b1b1b;font-weight:400;font-family:'Liberation Mono', monospace;"><span style="color:#8a8a8a">    width: </span><span style="color:#e27fb0">calc</span><span style="color:#8a8a8a">(</span><span style="color:#76a6ec">100%</span><span style="color:#8a8a8a"> - </span><span style="color:#76a6ec">4</span><span style="color:#8a8a8a"> * </span><span style="color:#e27fb0">var</span><span style="color:#8a8a8a">(--spacing));</span></div>
<div style="position:absolute;left:533px;top:467px;width:462px;height:19.6px;background:#fde7e9;"></div>
<div style="position:absolute;left:668.8px;top:471px;width:7.3px;height:14.5px;background:#f6b9bf;"></div>
<div id="t66" class="t" style="left:487px;top:468.11px;font-size:12px;line-height:16px;color:#7a7a7a;font-weight:400;font-family:'Liberation Mono', monospace;">26</div>
<div id="t67" class="t" style="left:540.5px;top:468.31px;font-size:12px;line-height:16px;color:#333;font-weight:400;font-family:'Liberation Mono', monospace;">-</div>
<div id="t68" class="t" style="left:560px;top:472.29px;font-size:12.05px;line-height:16px;color:#1b1b1b;font-weight:400;font-family:'Liberation Mono', monospace;"><span style="color:#333333">    max-width: </span><span style="color:#1b69d2">5</span><span style="color:#1b69d2">0rem</span><span style="color:#333333">;</span></div>
<div style="position:absolute;left:533px;top:486.6px;width:462px;height:19.7px;background:#dff3e4;"></div>
<div style="position:absolute;left:668.8px;top:490.6px;width:7.3px;height:14.5px;background:#9bdcb0;"></div>
<div id="t69" class="t" style="left:514.6px;top:488.01px;font-size:12px;line-height:16px;color:#7a7a7a;font-weight:400;font-family:'Liberation Mono', monospace;">26</div>
<div id="t70" class="t" style="left:538.8px;top:488.21px;font-size:12px;line-height:16px;color:#333;font-weight:400;font-family:'Liberation Mono', monospace;">+</div>
<div id="t71" class="t" style="left:560px;top:491.69px;font-size:12.05px;line-height:16px;color:#1b1b1b;font-weight:400;font-family:'Liberation Mono', monospace;"><span style="color:#333333">    max-width: </span><span style="color:#1b69d2">4</span><span style="color:#1b69d2">0rem</span><span style="color:#333333">;</span></div>
<div id="t72" class="t" style="left:487.2px;top:507.36px;font-size:12.17px;line-height:16px;color:#7a7a7a;font-weight:400;font-family:'Liberation Mono', monospace;">27</div>
<div id="t73" class="t" style="left:514.8px;top:507.36px;font-size:12.17px;line-height:16px;color:#7a7a7a;font-weight:400;font-family:'Liberation Mono', monospace;">27</div>
<div id="t74" class="t" style="left:560px;top:507.39px;font-size:12.05px;line-height:16px;color:#1b1b1b;font-weight:400;font-family:'Liberation Mono', monospace;"><span style="color:#8a8a8a">}</span></div>
<div id="t75" class="t" style="left:487.2px;top:523.06px;font-size:12.17px;line-height:16px;color:#7a7a7a;font-weight:400;font-family:'Liberation Mono', monospace;">28</div>
<div id="t76" class="t" style="left:514.8px;top:523.06px;font-size:12.17px;line-height:16px;color:#7a7a7a;font-weight:400;font-family:'Liberation Mono', monospace;">28</div>
<div id="t77" class="t" style="left:487.2px;top:538.86px;font-size:12.17px;line-height:16px;color:#7a7a7a;font-weight:400;font-family:'Liberation Mono', monospace;">29</div>
<div id="t78" class="t" style="left:514.8px;top:538.86px;font-size:12.17px;line-height:16px;color:#7a7a7a;font-weight:400;font-family:'Liberation Mono', monospace;">29</div>
<div id="t79" class="t" style="left:560px;top:538.89px;font-size:12.05px;line-height:16px;color:#1b1b1b;font-weight:400;font-family:'Liberation Mono', monospace;"><span style="color:#7ec495">.new-task-form</span><span style="color:#7b8fc2">:hover</span><span style="color:#8a8a8a"> {</span></div>
<div style="position:absolute;left:478px;top:569px;width:517px;height:1px;background:#d8e2f4;"></div>
<svg style="position:absolute;left:488px;top:576px;" width="19" height="23" viewBox="0 0 19 23" fill="none"><path d="M2.5 3 V9.2 H8.5" stroke="#3a3a3a" stroke-width="1.3"/><path d="M3 9 L8 4.5 C10 3 14 3 15.5 6 C16.5 8 16 10.5 14 12 L5 20.5" stroke="#3a3a3a" stroke-width="1.3"/></svg>
<div id="t80" class="t" style="left:519.5px;top:580.86px;font-size:13.4px;line-height:17px;color:#333333;font-weight:400;font-family:'Liberation Sans', sans-serif;transform:scaleX(0.9948);">1 insertion (+), 1 deletion (-)</div>
<svg style="position:absolute;left:691px;top:579px;" width="17" height="19" viewBox="0 0 17 19" fill="none"><rect x="4.4" y="1.2" width="10.4" height="14.2" rx="2" stroke="#333" stroke-width="1.3"/><path d="M2.4 4.2 V15.2 A2.6 2.6 0 0 0 5 17.8 H12.6" stroke="#333" stroke-width="1.3"/></svg>
<div id="t81" class="t" style="left:714.6px;top:580.86px;font-size:13.4px;line-height:17px;color:#333333;font-weight:400;font-family:'Liberation Sans', sans-serif;transform:scaleX(0.9915);">Copy</div>
</body></html>
